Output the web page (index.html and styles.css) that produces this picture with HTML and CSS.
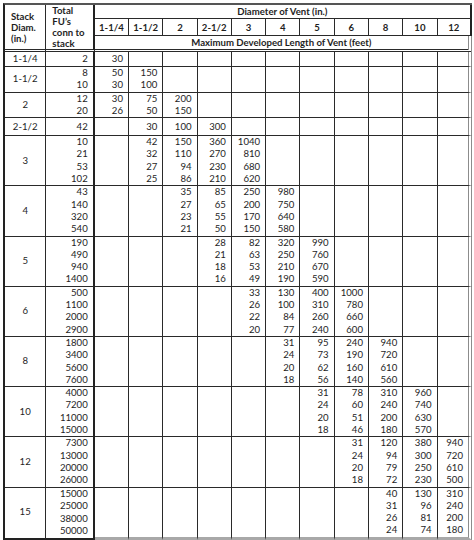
FILE: index.html
```html
<!DOCTYPE html>
<html>
<head>
<meta charset="utf-8">
<link rel="stylesheet" href="styles.css">
</head>
<body>
<table class="vt">
<colgroup>
<col class="c1"><col class="c2">
<col class="cv"><col class="cv"><col class="cv"><col class="cv"><col class="cv"><col class="cv"><col class="cv"><col class="cv"><col class="cv"><col class="cv"><col class="cv">
</colgroup>
<thead>
<tr class="hr1">
<th rowspan="3" class="hl">Stack<br>Diam.<br>(in.)</th>
<th rowspan="3" class="hl hfu">Total<br>FU’s<br>conn to<br>stack</th>
<th colspan="11" class="dark">Diameter of Vent (in.)</th>
</tr>
<tr class="hr2">
<th>1-1/4</th><th>1-1/2</th><th>2</th><th>2-1/2</th><th>3</th><th>4</th><th>5</th><th>6</th><th>8</th><th>10</th><th class="dark">12</th>
</tr>
<tr class="hr3">
<th colspan="11" class="grey">Maximum Developed Length of Vent (feet)</th>
</tr>
</thead>
<tbody>
<tr class="r1">
<td class="sd">1-1/4</td><td class="fu">2</td>
<td>30</td><td></td><td></td><td></td><td></td><td></td><td></td><td></td><td></td><td></td><td class="grey"></td>
</tr>
<tr class="r2">
<td class="sd">1-1/2</td><td class="fu">8<br>10</td>
<td>50<br>30</td><td>150<br>100</td><td></td><td></td><td></td><td></td><td></td><td></td><td></td><td></td><td class="grey"></td>
</tr>
<tr class="r2">
<td class="sd">2</td><td class="fu">12<br>20</td>
<td>30<br>26</td><td>75<br>50</td><td>200<br>150</td><td></td><td></td><td></td><td></td><td></td><td></td><td></td><td class="grey"></td>
</tr>
<tr class="r1b">
<td class="sd">2-1/2</td><td class="fu">42</td>
<td></td><td>30</td><td>100</td><td>300</td><td></td><td></td><td></td><td></td><td></td><td></td><td class="grey"></td>
</tr>
<tr class="r4">
<td class="sd">3</td><td class="fu">10<br>21<br>53<br>102</td>
<td></td><td>42<br>32<br>27<br>25</td><td>150<br>110<br>94<br>86</td><td>360<br>270<br>230<br>210</td><td>1040<br>810<br>680<br>620</td><td></td><td></td><td></td><td></td><td></td><td class="grey"></td>
</tr>
<tr class="r4">
<td class="sd">4</td><td class="fu">43<br>140<br>320<br>540</td>
<td></td><td></td><td>35<br>27<br>23<br>21</td><td>85<br>65<br>55<br>50</td><td>250<br>200<br>170<br>150</td><td>980<br>750<br>640<br>580</td><td></td><td></td><td></td><td></td><td class="grey"></td>
</tr>
<tr class="r4">
<td class="sd">5</td><td class="fu">190<br>490<br>940<br>1400</td>
<td></td><td></td><td></td><td>28<br>21<br>18<br>16</td><td>82<br>63<br>53<br>49</td><td>320<br>250<br>210<br>190</td><td>990<br>760<br>670<br>590</td><td></td><td></td><td></td><td class="grey"></td>
</tr>
<tr class="r4">
<td class="sd">6</td><td class="fu">500<br>1100<br>2000<br>2900</td>
<td></td><td></td><td></td><td></td><td>33<br>26<br>22<br>20</td><td>130<br>100<br>84<br>77</td><td>400<br>310<br>260<br>240</td><td>1000<br>780<br>660<br>600</td><td></td><td></td><td class="grey"></td>
</tr>
<tr class="r4">
<td class="sd">8</td><td class="fu">1800<br>3400<br>5600<br>7600</td>
<td></td><td></td><td></td><td></td><td></td><td>31<br>24<br>20<br>18</td><td>95<br>73<br>62<br>56</td><td>240<br>190<br>160<br>140</td><td>940<br>720<br>610<br>560</td><td></td><td class="grey"></td>
</tr>
<tr class="r4">
<td class="sd">10</td><td class="fu">4000<br>7200<br>11000<br>15000</td>
<td></td><td></td><td></td><td></td><td></td><td></td><td>31<br>24<br>20<br>18</td><td>78<br>60<br>51<br>46</td><td>310<br>240<br>200<br>180</td><td>960<br>740<br>630<br>570</td><td class="grey"></td>
</tr>
<tr class="r4">
<td class="sd">12</td><td class="fu">7300<br>13000<br>20000<br>26000</td>
<td></td><td></td><td></td><td></td><td></td><td></td><td></td><td>31<br>24<br>20<br>18</td><td>120<br>94<br>79<br>72</td><td>380<br>300<br>250<br>230</td><td class="grey">940<br>720<br>610<br>500</td>
</tr>
<tr class="r4 last">
<td class="sd">15</td><td class="fu">15000<br>25000<br>38000<br>50000</td>
<td></td><td></td><td></td><td></td><td></td><td></td><td></td><td></td><td>40<br>31<br>26<br>24</td><td>130<br>96<br>81<br>74</td><td class="grey">310<br>240<br>200<br>180</td>
</tr>
</tbody>
</table>
</body>
</html>
```

FILE: styles.css
```css
html, body {
  margin: 0;
  padding: 0;
  background: #ffffff;
}

.vt {
  margin: 3px 0 0 3px;
  border-collapse: separate;
  border-spacing: 0;
  table-layout: fixed;
  width: 469px;
  font-family: Lato, "Liberation Sans", sans-serif;
  font-size: 9.6px;
  color: #1e1e1e;
  border-left: 2px solid #222;
  border-top: 2px solid #555;
}

.c1 { width: 41px; }
.c2 { width: 48px; }
.cv { width: 34px; }

.vt th,
.vt td {
  border-right: 1px solid #2a2a2a;
  border-bottom: 1px solid #2a2a2a;
  padding: 0;
  overflow: hidden;
  white-space: nowrap;
}

.vt th {
  font-weight: 700;
  text-align: center;
  vertical-align: middle;
  line-height: 11px;
}

.vt th.hl {
  text-align: left;
  padding-left: 6px;
  border-bottom: 3px double #2a2a2a;
}

.vt th.hfu {
  border-right: 2px solid #222;
}

.hr1 th { height: 13px; }
.hr2 th { height: 16px; }
.hr3 th {
  height: 13px;
  border-bottom: 3px double #2a2a2a;
}

.vt th.dark {
  border-right: 2px solid #222;
}

.vt .grey {
  border-right: 4px double #8c8c8c;
}

.vt td {
  text-align: right;
  vertical-align: middle;
  padding-right: 5px;
  line-height: 12.3px;
}

.vt td.sd {
  text-align: center;
  padding-right: 0;
}

.vt td.fu {
  border-right: 2px solid #222;
}

.r1 td { height: 14px; }
.r2 td { height: 24px; }
.r1b td { height: 17px; }
.r4 td { height: 49px; }

.last td {
  height: 48px;
  border-bottom: 3px solid #a8a8a8;
}

.last td.sd,
.last td.fu {
  border-bottom: 2px solid #222;
}
```
